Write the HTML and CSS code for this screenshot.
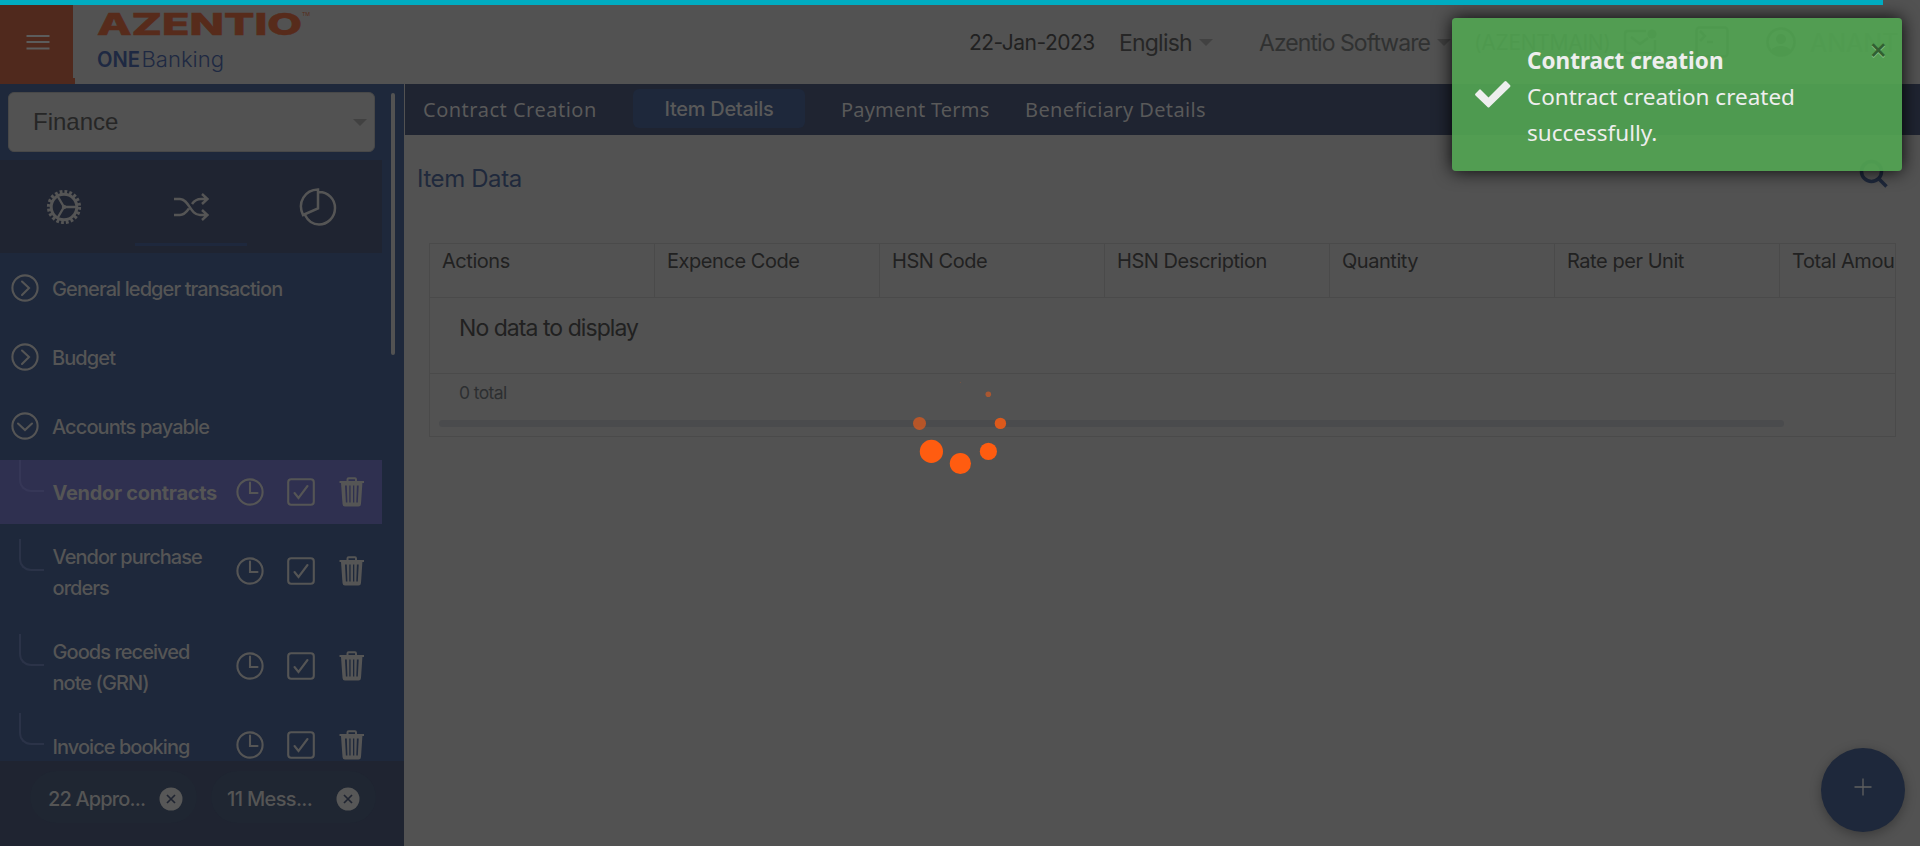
FILE: index.html
```html
<!DOCTYPE html>
<html lang="en">
<head>
<meta charset="utf-8">
<title>ONEBanking - Contract Creation</title>
<link rel="stylesheet" href="styles.css">
</head>
<body>
<svg class="defs" width="0" height="0">
  <symbol id="clock" viewBox="0 0 28 28"><circle cx="14" cy="14" r="12.6"/><path d="M14 4.5V15h7.5"/></symbol>
  <symbol id="check" viewBox="0 0 28 28"><rect x="1.2" y="1.2" width="25.6" height="25.6" rx="3"/><path d="M7.5 15l4 5 9-12"/></symbol>
  <symbol id="trash" viewBox="0 0 28 30"><path class="solid" d="M1.500 4h7V2.500Q8.500 .3 10.500.3h6.500q2 0 2 2.200V4h7v2h-1.600l-1.400 21q-.2 2.500-2.500 2.500H7q-2.300 0-2.500-2.500L3 6H1.500zM10.500 4h6.500V2.300h-6.500zM7 8.500l.9 17h1.500l-.6-17zM11.300 8.500v17h1.300v-17zM15 8.500v17h1.300v-17zM18.900 8.500l-.6 17h1.500l.9-17z" fill-rule="evenodd"/></symbol>
  <symbol id="right" viewBox="0 0 28 28"><circle cx="14" cy="14" r="12.600"/><path d="M11 7.500l7 6.500-7 7"/></symbol>
  <symbol id="down" viewBox="0 0 28 28"><circle cx="14" cy="14" r="12.600"/><path d="M7 11.500l7 6.500 7-6.500"/></symbol>
</svg>

<div class="progress"></div>
<header class="header">
  <button class="burger" aria-label="Menu"><svg width="24" height="18" viewBox="0 0 24 18"><path d="M.5 3h23M.5 9h23M.5 15.500h23"/></svg></button>
  <svg class="logo" width="220" height="80" viewBox="0 0 220 80">
    <text class="brand" x="0" y="33" textLength="205" lengthAdjust="spacingAndGlyphs">AZENTIO</text>
    <text class="tm" x="205" y="14" textLength="8" lengthAdjust="spacingAndGlyphs">TM</text>
    <text class="one" x="0" y="65" textLength="43" lengthAdjust="spacingAndGlyphs">ONE</text>
    <text class="banking" x="44.500" y="65" textLength="82.500" lengthAdjust="spacingAndGlyphs">Banking</text>
  </svg>
  <span class="date">22-Jan-2023</span>
  <span class="lang">English</span><i class="caret"></i>
  <span class="company">Azentio Software</span><i class="caret caret-co"></i>
  <span class="branch">(AZENTMAIN)</span>
  <svg class="hicon mail" width="34" height="28" viewBox="0 0 34 28"><path d="M23 3H5Q2 3 2 6v16q0 3 3 3h24q3 0 3-3V12M8 9l9 7 8-6"/><circle class="solid" cx="29" cy="6" r="4.500"/></svg>
  <svg class="hicon term" width="34" height="32" viewBox="0 0 34 32"><rect x="1.500" y="1.500" width="31" height="29" rx="3"/><path d="M5 5l5 5-5 5M12 16h6"/></svg>
  <svg class="hicon user" width="30" height="30" viewBox="0 0 30 30"><circle cx="15" cy="15" r="13.500"/><circle class="solid" cx="15" cy="12" r="5"/><path class="solid" d="M5.500 23Q9 19 15 19t9.500 4q-4 5-9.500 5t-9.500-5z"/></svg>
  <span class="username">ANANT</span>
</header>

<div class="layout">
  <aside class="sidebar">
    <div class="side-scroll">
      <div class="module">Finance<i class="caret"></i></div>
      <nav class="modes">
        <span><svg width="36" height="36" viewBox="0 0 36 36"><circle cx="18" cy="18" r="15.200" class="teeth"/><circle cx="18" cy="18" r="12.800" stroke-width="3"/><path stroke-width="2.400" d="M18 18h13M18 18l-6.500-11M18 18l-6.500 11"/><circle class="solid" cx="18" cy="18" r="2.200"/></svg></span>
        <span class="current"><svg width="36" height="36" viewBox="0 0 36 36"><path stroke-width="2.500" d="M1 10h6c9 0 10 16 20 16h7M1 26h6c4 0 6.500-3 9-6.500M19 15c2.500-3.500 5-5 9-5h6M29 5l5.500 5-5.500 5M29 21l5.500 5-5.500 5" /></svg></span>
        <span><svg width="38" height="38" viewBox="0 0 38 38"><path stroke-width="2.500" d="M19 1.500v19L4 27C-2 14 6 2 19 1.500zM20 4c9 0 16 7 16 16 0 10-8 16.500-16 16.500-6 0-11-3.500-14-9.500"/></svg></span>
      </nav>
      <div class="group"><svg class="ic"><use href="#right"/></svg><span>General ledger transaction</span></div>
      <div class="group"><svg class="ic"><use href="#right"/></svg><span>Budget</span></div>
      <div class="group"><svg class="ic"><use href="#down"/></svg><span>Accounts payable</span></div>
      <div class="item selected"><i class="branch-line"></i><span class="label">Vendor contracts</span><svg class="ic"><use href="#clock"/></svg><svg class="ic"><use href="#check"/></svg><svg class="ic bin"><use href="#trash"/></svg></div>
      <div class="item"><i class="branch-line"></i><span class="label">Vendor purchase<br>orders</span><svg class="ic"><use href="#clock"/></svg><svg class="ic"><use href="#check"/></svg><svg class="ic bin"><use href="#trash"/></svg></div>
      <div class="item"><i class="branch-line"></i><span class="label">Goods received<br>note (GRN)</span><svg class="ic"><use href="#clock"/></svg><svg class="ic"><use href="#check"/></svg><svg class="ic bin"><use href="#trash"/></svg></div>
      <div class="item"><i class="branch-line"></i><span class="label">Invoice booking</span><svg class="ic"><use href="#clock"/></svg><svg class="ic"><use href="#check"/></svg><svg class="ic bin"><use href="#trash"/></svg></div>
    </div>
    <i class="thumb"></i>
    <footer class="alerts">
      <div class="pill appro"><span>22 Appro...</span><svg width="24" height="24" viewBox="0 0 24 24"><circle cx="12" cy="12" r="11.500"/><path d="M8 8l8 8M16 8l-8 8"/></svg></div>
      <div class="pill mess"><span>11 Mess...</span><svg width="24" height="24" viewBox="0 0 24 24"><circle cx="12" cy="12" r="11.500"/><path d="M8 8l8 8M16 8l-8 8"/></svg></div>
    </footer>
  </aside>

  <main class="main">
    <nav class="tabs">
      <span class="t1">Contract Creation</span>
      <span class="active">Item Details</span>
      <span class="t3">Payment Terms</span>
      <span class="t4">Beneficiary Details</span>
    </nav>
    <div class="title-row">
      <h1>Item Data</h1>
      <svg class="search" width="30" height="30" viewBox="0 0 30 30"><circle cx="12.500" cy="12.500" r="10"/><path d="M20 20l7.500 7.500"/></svg>
    </div>
    <section class="table">
      <div class="thead"><span>Actions</span><span>Expence Code</span><span>HSN Code</span><span>HSN Description</span><span>Quantity</span><span>Rate per Unit</span><span>Total Amount</span></div>
      <div class="empty">No data to display</div>
      <div class="tfoot"><span>0 total</span><i></i></div>
    </section>
  </main>
</div>

<button class="fab" aria-label="Add"><svg width="18" height="18" viewBox="0 0 18 18"><path d="M9 .5v17M.5 9h17"/></svg></button>

<svg class="spinner" width="100" height="100" viewBox="910 375 100 100">
  <circle cx="960.300" cy="382.500" r=".5" opacity=".3"/>
  <circle cx="988.300" cy="394.300" r="2.800" opacity=".5"/>
  <circle cx="1000.400" cy="423.400" r="5.700" opacity=".8"/>
  <circle cx="988.400" cy="451.400" r="8.600"/>
  <circle cx="960.400" cy="463.500" r="10.600"/>
  <circle cx="931.400" cy="451.400" r="11.600"/>
  <circle cx="919.500" cy="423.400" r="6.500" opacity=".6"/>
</svg>

<div class="toast">
  <svg class="tick" width="38" height="30" viewBox="0 0 38 30"><path d="M6.500 9.500L14.500 17.500 30.500 1.500q1-1 2 0l3.500 3.500q1 1 0 2L15.500 27q-1 1-2 0L1.500 15.500q-1-1 0-2l3.500-3.500q.8-1 1.500-.5z"/></svg>
  <div class="msg"><b>Contract creation</b><p>Contract creation created<br>successfully.</p></div>
  <span class="close">×</span>
</div>
</body>
</html>
```
FILE: styles.css
```css
* { box-sizing: border-box; }
body {
  margin: 0; height: 846px; overflow: hidden; position: relative;
  background: #525252; color: #212121;
  font-family: Inter, "Liberation Sans", sans-serif;
}
svg { fill: none; flex: none; display: block; }
.defs { position: absolute; }
button { border: 0; padding: 0; }
.solid { fill: currentColor; stroke: none; }

.progress { position: absolute; top: 0; left: 0; width: 1883px; height: 5px; background: #00acc1; z-index: 5; }

.header { height: 84px; display: flex; align-items: center; white-space: nowrap; }
.burger {
  width: 75px; height: 84px; background: linear-gradient(#50291d, #50291d) 0 0 / 73px 100% no-repeat, linear-gradient(#50291d, #50291d) 0 100% / 75px 6px no-repeat;
  display: flex; align-items: center; padding-left: 26px;
}
.burger svg { stroke: #5c5c5c; stroke-width: 2.200; }
.logo { margin-left: 22px; margin-right: 652px; }
.brand { font: 800 30.500px Inter, sans-serif; fill: #572b1b; stroke: #572b1b; stroke-width: .6; }
.tm { font: 5px Inter, sans-serif; fill: #572b1b; }
.one { font: 600 21.500px Inter, sans-serif; fill: #1e2942; }
.banking { font: 300 21.500px Inter, sans-serif; fill: #1e2942; }
.header > span { line-height: 30px; padding-top: 2px; }
.date { width: 150px; font-size: 21px; letter-spacing: -.5px; }
.lang { width: 80px; font-size: 23px; letter-spacing: -.8px; color: #262626; }
.caret { border: 7px solid transparent; border-top-color: #414141; border-bottom: 0; width: 14px; flex: none; }
.company { margin-left: 46px; width: 178px; font-size: 23px; letter-spacing: -.95px; color: #303131; }
.branch { margin-left: 23px; width: 149px; font-size: 21px; letter-spacing: -.3px; color: #181818; }
.hicon { stroke: #181818; stroke-width: 2.500; color: #181818; }
.term { margin-left: 38px; }
.user { margin-left: 37px; }
.username { margin-left: 14px; font-size: 25px; color: #303131; }

.layout { display: flex; height: 762px; }
.sidebar { width: 404px; background: #1e283b; position: relative; color: #555; }
.side-scroll { width: 382px; height: 677px; overflow: hidden; padding-top: 8px; }
.module {
  margin: 0 7px 8px 8px; height: 60px; border: 1px solid #484848; border-radius: 6px; background: #525252;
  color: #262626; font: 24px/58px "Liberation Sans", Arial, sans-serif; padding: 0 7px 0 24px;
  display: flex; justify-content: space-between; align-items: center;
}
.modes { height: 93px; background: #1f2431; display: flex; }
.modes span { flex: 1; display: flex; align-items: center; justify-content: center; border-bottom: 0; }
.modes .current { background: linear-gradient(#1e283d, #1e283d) 50% 83px / 112px 3px no-repeat; }
.modes svg { stroke: #555; color: #555; }
.teeth { stroke-width: 3.800; stroke-dasharray: 2.750 2.025; }
.group { height: 69px; display: flex; align-items: center; padding-left: 10px; font-size: 20px; font-weight: 500; letter-spacing: -.9px; }
.group span { margin-left: 14px; padding-top: 3px; }
.group .ic { margin-left: .5px; margin-right: -.5px; }
.ic { width: 28px; height: 28px; stroke: #555; color: #555; stroke-width: 2.100; stroke-linecap: round; }
.item { display: flex; align-items: center; padding: 16px 16px 16px 0; font-size: 20px; font-weight: 500; letter-spacing: -.95px; line-height: 31.500px; position: relative; }
.item .label { width: 183px; margin: 2px 0 -2px 52.500px; white-space: nowrap; }
.item .ic + .ic { margin-left: 23px; }
.item .bin { height: 30px; }
.selected { background: #2f3050; font-weight: 700; letter-spacing: -.3px; }
.branch-line { position: absolute; left: 19px; top: calc(50% - 32px); width: 25px; height: 32px; border-left: 2px solid #2b3348; border-bottom: 2px solid #2b3348; border-bottom-left-radius: 12px; }
.selected .branch-line { border-color: #363757; }
.thumb { position: absolute; left: 391px; top: 9px; width: 4px; height: 262px; border-radius: 2px; background: #525252; }
.alerts { height: 85px; background: #1f2431; display: flex; padding-top: 10px; font-size: 20px; font-weight: 500; letter-spacing: -.85px; }
.pill { height: 52px; border-radius: 26px; background: #1f2632; display: flex; align-items: center; justify-content: space-between; }
.appro { margin-left: 30px; width: 167px; padding: 4px 14px 0 18px; }
.mess { margin-left: 14px; width: 165px; padding: 4px 16px 0 16px; letter-spacing: -.65px; }
.pill svg circle { fill: #575757; }
.pill svg path { stroke: #1f2431; stroke-width: 1.700; }

.main { width: 1515px; margin-left: 1px; }
.tabs { height: 51px; background: #1f2431; display: flex; align-items: center; color: #595959; font: 20px/30px "Noto Sans", sans-serif; letter-spacing: .5px; padding-left: 18px; white-space: nowrap; }
.tabs > span { padding-top: 1px; }
.tabs .t1 { width: 210px; }
.tabs .active { width: 172px; height: 39px; margin-right: 36px; margin-bottom: 2px; border-radius: 6px; background: #1e283b; font: 500 20px/38px Inter, sans-serif; letter-spacing: -.3px; text-align: center; }
.tabs .t3 { width: 184px; letter-spacing: .2px; }
.tabs .t4 { letter-spacing: .38px; }
.title-row { height: 108px; display: flex; justify-content: space-between; padding: 24px 31px 0 12px; }
.title-row h1 { margin: 0; font-size: 24px; font-weight: 400; line-height: 40px; letter-spacing: -.4px; color: #1f293c; }
.search { stroke: #1e283b; stroke-width: 3.500; }
.table { width: 1467px; height: 194px; margin-left: 24px; border: 1px solid #4a4a4a; }
.thead { height: 54px; border-bottom: 1px solid #4a4a4a; display: flex; overflow: hidden; font-size: 20px; letter-spacing: -.45px; line-height: 34px; }
.thead span { flex: 0 0 225px; padding-left: 12px; border-right: 1px solid #4a4a4a; white-space: nowrap; }
.empty { height: 76px; border-bottom: 1px solid #4a4a4a; padding-left: 29px; font-size: 23px; line-height: 60px; letter-spacing: -.95px; }
.tfoot { padding: 3px 0 0 29px; font-size: 17.500px; line-height: 32px; letter-spacing: -.6px; color: #2d2f31; }
.tfoot span { display: block; }
.tfoot i { display: block; margin: 11px 0 0 -20px; width: 1345px; height: 7px; border-radius: 4px; background: #4a4b4d; }

.fab { position: absolute; left: 1821px; top: 748px; width: 84px; height: 84px; border-radius: 50%; background: #1e283b; box-shadow: 0 3px 12px rgba(0,0,0,.3); display: flex; justify-content: center; padding-top: 30px; align-items: flex-start; }
.fab svg { stroke: #606060; stroke-width: 1.300; }
.spinner { position: absolute; left: 910px; top: 375px; fill: #ff5c10; }

.toast { position: absolute; left: 1452px; top: 18px; width: 450px; height: 153px; border-radius: 4px; background: rgba(82,162,82,.94); box-shadow: 0 0 18px rgba(0,0,0,.9); color: #eee; display: flex; font: 22.500px/36px "Noto Sans", sans-serif; z-index: 4; }
.tick { margin: 62px 0 0 22px; fill: #eee; }
.msg { margin: 25px 0 0 15px; white-space: nowrap; }
.msg b, .msg p { display: block; margin: 0; }
.close { position: absolute; right: 15px; top: 14px; font: 600 30px/36px "Open Sans", sans-serif; color: #315f31; text-shadow: 0 1px 0 #8cc48c; }
```
